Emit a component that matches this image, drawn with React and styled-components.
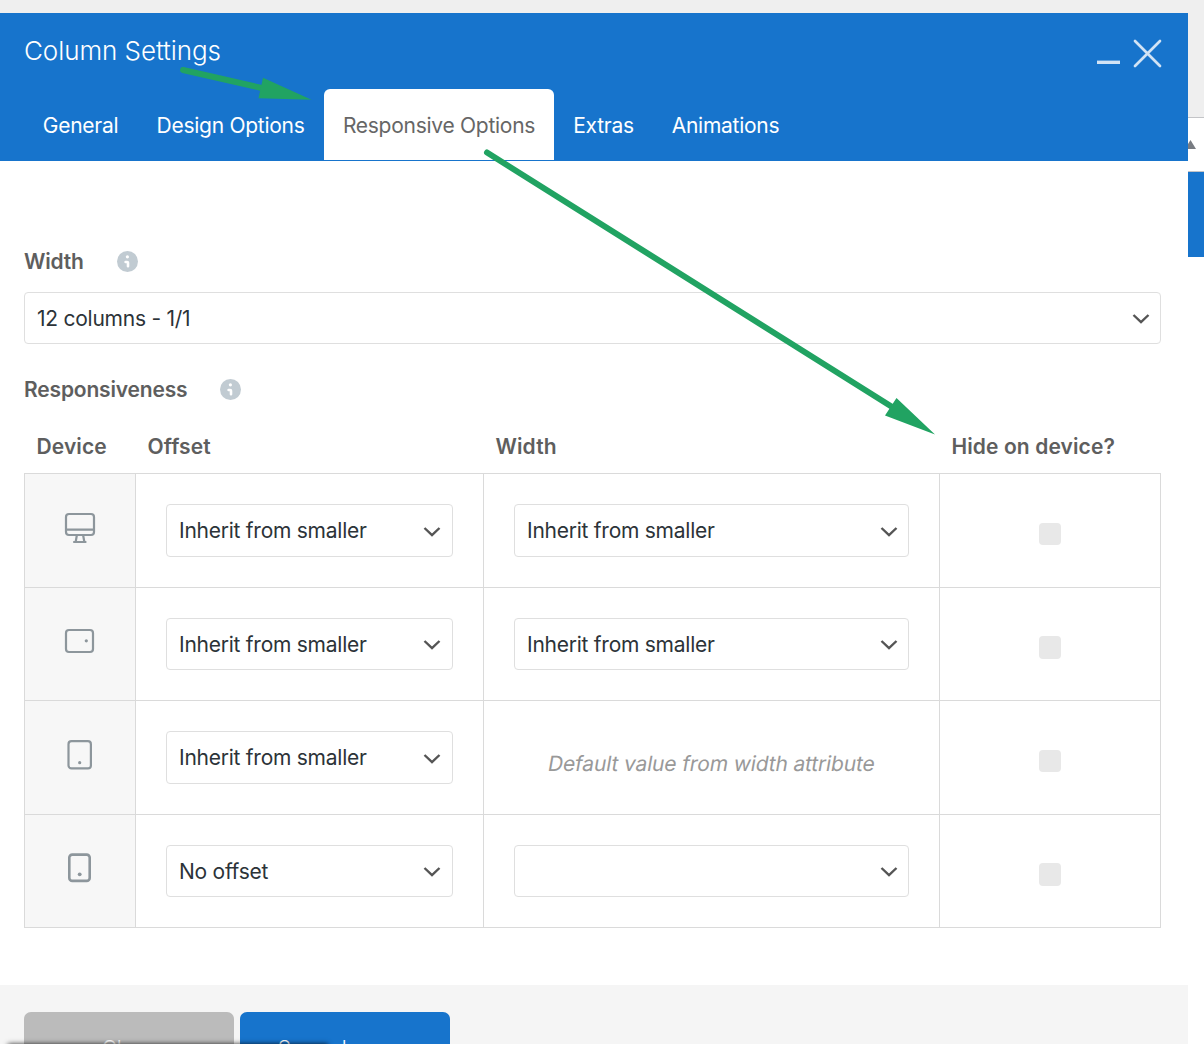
import React, { useState } from 'react'
import styled, { createGlobalStyle } from 'styled-components';

const tabs = [
    { label: 'General', width: 113 },
    { label: 'Design Options', width: 187 },
    { label: 'Responsive Options', width: 230 },
    { label: 'Extras', width: 99 },
    { label: 'Animations', width: 145 },
];

const devices = [
    { icon: 'desktop', offset: 'Inherit from smaller', width: 'Inherit from smaller', height: 114 },
    { icon: 'landscape', offset: 'Inherit from smaller', width: 'Inherit from smaller', height: 113 },
    { icon: 'portrait', offset: 'Inherit from smaller', note: 'Default value from width attribute', height: 114 },
    { icon: 'phone', offset: 'No offset', width: '', height: 113 },
];

function DeviceIcon({ name }) {
    return (
        <IconSvg viewBox="0 0 32 32">
            {name === 'desktop' && <>
                <rect x="2" y="2" width="28" height="21" rx="3"/>
                <path d="M2 17.6H30M12.8 23.5L11.7 29.8M19.2 23.5L20.3 29.8M9.2 30H22.4"/>
            </>}
            {name === 'landscape' && <>
                <rect x="2" y="5" width="27" height="22" rx="3"/>
                <circle cx="22.3" cy="15.8" r="1.6"/>
            </>}
            {name === 'portrait' && <>
                <rect x="4.5" y="2.2" width="22.4" height="27.2" rx="3"/>
                <circle cx="15.7" cy="23.7" r="1.6"/>
            </>}
            {name === 'phone' && <>
                <rect x="5.3" y="2.6" width="20.4" height="26.3" rx="3" strokeWidth="2.6"/>
                <circle cx="15.7" cy="22.3" r="1.9"/>
            </>}
        </IconSvg>
    )
}

function InfoIcon() {
    return (
        <InfoSvg viewBox="0 0 21 21">
            <circle cx="10.5" cy="10.5" r="10.5" fill="#c1cbd2"/>
            <circle cx="10.4" cy="5.8" r="1.6" fill="#fff"/>
            <path d="M8.6 11H10.2Q11 11 11 11.8V15.2" fill="none" stroke="#fff" strokeWidth="2.6" strokeLinecap="round"/>
        </InfoSvg>
    )
}

function Select({ value, height, narrow }) {
    return (
        <SelectBox type="button" $height={height} $narrow={narrow}>
            <span>{value}</span>
            <svg width="18" height="12" viewBox="0 0 18 12">
                <path d="M1.5 2L9 9.2L16.5 2" fill="none" stroke="#555" strokeWidth="2.4"/>
            </svg>
        </SelectBox>
    )
}

function App() {

    const [active, setActive] = useState('Responsive Options');

    return (
        <Page>
            <GlobalStyle/>
            <Panel>
                <Header>
                    <TitleRow>
                        <Title>Column Settings</Title>
                        <Controls viewBox="0 0 66 30">
                            <path d="M1 24.3H24" strokeWidth="3.4"/>
                            <path d="M39 3L64 28M64 3L39 28" strokeWidth="2.7" strokeLinecap="round"/>
                        </Controls>
                    </TitleRow>
                    <Tabs>
                        {tabs.map((tab) => (
                            <Tab key={tab.label} $width={tab.width} $active={tab.label === active} onClick={() => setActive(tab.label)}>
                                {tab.label}
                            </Tab>
                        ))}
                    </Tabs>
                </Header>

                <Content>
                    <Label>Width <InfoIcon/></Label>
                    <Select value="12 columns - 1/1" height={52}/>
                    <Label $spaced>Responsiveness <InfoIcon/></Label>
                    <HeadRow>
                        <HeadCell>Device</HeadCell>
                        <HeadCell>Offset</HeadCell>
                        <HeadCell>Width</HeadCell>
                        <HeadCell>Hide on device?</HeadCell>
                    </HeadRow>
                    <Table>
                        {devices.map((device) => (
                            <Row key={device.icon} $height={device.height}>
                                <IconCell><DeviceIcon name={device.icon}/></IconCell>
                                <Cell><Select value={device.offset} height={device.height - 61} narrow/></Cell>
                                <Cell>
                                    {device.note
                                        ? <Note>{device.note}</Note>
                                        : <Select value={device.width} height={device.height - 61}/>}
                                </Cell>
                                <CheckCell><Checkbox type="checkbox"/></CheckCell>
                            </Row>
                        ))}
                    </Table>
                </Content>

                <Footer>
                    <Button>Close</Button>
                    <Button $primary>Save changes</Button>
                </Footer>
            </Panel>

            <Side>
                <SideTop/>
                <SideToggle>
                    <svg width="8" height="9" viewBox="0 0 8 9"><path d="M-3 9L2.5 0L8 9Z" fill="#787c82"/></svg>
                </SideToggle>
                <SideBlock/>
            </Side>

            <Arrows viewBox="0 0 1204 1044">
                <path d="M183 70L264 88.5M487 152.5L893 407.5" strokeWidth="6" strokeLinecap="round"/>
                <path d="M263 77.7L311.5 99.7L258.5 98.3ZM896.5 398L935 434.5L885 415.5Z" fill="#21a362" stroke="none"/>
            </Arrows>
            <StatusBar/>
        </Page>
    )
}

const GlobalStyle = createGlobalStyle`
    * {
        box-sizing: border-box;
    }

    body {
        margin: 0;
        background: #fff;
        font-family: Inter, "Liberation Sans", sans-serif;
    }
`;

const Page = styled.main`
    position: relative;
    display: flex;
    width: 1204px;
    height: 1044px;
    overflow: hidden;
`;

const Panel = styled.section`
    width: 1188px;
    border-top: 13px solid #efefef;
    background: #fff;
`;

const Header = styled.header`
    height: 148px;
    padding: 0 24px;
    background: #1774cc;
`;

const TitleRow = styled.div`
    display: flex;
    justify-content: space-between;
    height: 76px;
`;

const Title = styled.h1`
    margin: 22px 0 0;
    color: #fff;
    font-size: 26px;
    line-height: 32px;
    font-weight: 300;
    letter-spacing: -0.06px;
`;

const Controls = styled.svg`
    width: 66px;
    height: 30px;
    margin: 25px 2px 0 0;
    fill: none;
    stroke: #d1e3f5;
`;

const Tabs = styled.nav`
    display: flex;
`;

const Tab = styled.button`
    width: ${(props) => props.$width}px;
    height: 71px;
    padding: 2px 0 0;
    border: 0;
    border-radius: 6px 6px 0 0;
    background: ${(props) => (props.$active ? '#fff' : 'transparent')};
    color: ${(props) => (props.$active ? '#666' : '#fff')};
    font-family: inherit;
    font-size: 21px;
    letter-spacing: -0.27px;
    white-space: nowrap;
    cursor: pointer;
`;

const Content = styled.div`
    height: 824px;
    padding: 90px 27px 0 24px;
`;

const Label = styled.div`
    display: flex;
    align-items: center;
    gap: 33px;
    height: 21px;
    margin: ${(props) => (props.$spaced ? '35px 0 0' : '0 0 20px')};
    color: #5e5e5e;
    font-size: 21px;
    font-weight: 600;
    letter-spacing: -0.17px;
`;

const InfoSvg = styled.svg`
    width: 21px;
    height: 21px;
`;

const SelectBox = styled.button`
    display: flex;
    align-items: center;
    justify-content: space-between;
    width: 100%;
    height: ${(props) => props.$height}px;
    padding: 0 ${(props) => (props.$narrow ? 11 : 10)}px 0 12px;
    border: 1px solid #dfdfdf;
    border-radius: 4px;
    background: #fff;
    color: #2c3338;
    font-family: inherit;
    font-size: 21px;
    letter-spacing: -0.25px;
    cursor: pointer;

    svg {
        margin-top: 2px;
    }
`;

const columns = '111px 348px 456px 221px';

const HeadRow = styled.div`
    display: grid;
    grid-template-columns: ${columns};
    align-items: center;
    height: 73px;
    padding: 20px 0 0;
`;

const HeadCell = styled.div`
    padding-left: 12.5px;
    color: #5e5e5e;
    font-size: 21px;
    font-weight: 600;
    letter-spacing: 0.1px;
    white-space: nowrap;
`;

const Table = styled.div`
    border: 1px solid #dadada;
    border-width: 1px 0 0 1px;
`;

const Row = styled.div`
    display: grid;
    grid-template-columns: ${columns};
    height: ${(props) => props.$height}px;
`;

const Cell = styled.div`
    padding: 30px 30px 0;
    border: 1px solid #dadada;
    border-width: 0 1px 1px 0;
`;

const IconCell = styled(Cell)`
    display: flex;
    align-items: center;
    justify-content: center;
    padding: 0 0 6px;
    background: #f7f7f7;
`;

const CheckCell = styled(Cell)`
    display: flex;
    align-items: center;
    justify-content: center;
    padding: 7px 0 0;
`;

const IconSvg = styled.svg`
    width: 32px;
    height: 32px;
    fill: none;
    stroke: #8d969c;
    stroke-width: 2.2;

    circle {
        fill: #8d969c;
        stroke: none;
    }
`;

const Note = styled.div`
    padding-top: 20px;
    color: #999;
    font-size: 21px;
    line-height: 26px;
    letter-spacing: -0.15px;
    text-align: center;
    white-space: nowrap;
    transform: skewX(-10deg);
    transform-origin: 50% 33px;
`;

const Checkbox = styled.input`
    appearance: none;
    width: 22px;
    height: 22.5px;
    margin: 0;
    border-radius: 4px;
    background: #e8e8e8;
`;

const Footer = styled.footer`
    display: flex;
    gap: 6px;
    height: 120px;
    padding: 27px 24px;
    background: #f5f5f5;
`;

const Button = styled.button`
    width: 210px;
    height: 72px;
    padding: 0;
    border: 0;
    border-radius: 7px;
    background: ${(props) => (props.$primary ? '#1774cc' : '#bbb')};
    color: #fff;
    font-family: inherit;
    font-size: 21px;
    font-weight: 300;
    letter-spacing: -0.25px;
`;

const Side = styled.aside`
    width: 16px;
    background: #fff;
`;

const SideTop = styled.div`
    height: 117px;
    background: #efefef;
`;

const SideToggle = styled.div`
    height: 55px;
    padding-top: 22px;
    border: 1px solid #c3c4c7;
    border-width: 1px 0;

    svg {
        display: block;
    }
`;

const SideBlock = styled.div`
    height: 85px;
    background: #1774cc;
`;

const Arrows = styled.svg`
    position: absolute;
    inset: 0;
    pointer-events: none;
    fill: none;
    stroke: #21a362;
`;

/* sits just under the fold, only its shadow shows */
const StatusBar = styled.div`
    position: absolute;
    left: 8px;
    bottom: -20px;
    width: 320px;
    height: 20px;
    box-shadow: 0 0 5px rgba(0, 0, 0, 0.8);
`;

export default App;
